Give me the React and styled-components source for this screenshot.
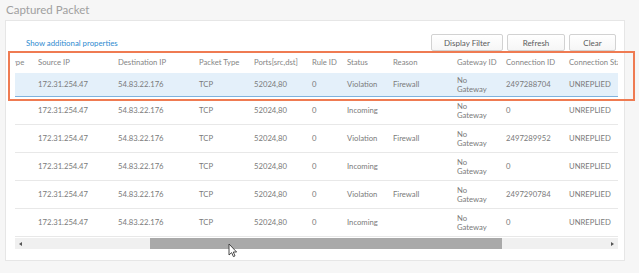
import React from "react";
import styled, { createGlobalStyle } from "styled-components";

const GlobalStyle = createGlobalStyle`
  html, body {
    margin: 0;
    padding: 0;
    background: #f6f6f6;
  }
  body {
    font-family: Lato, "Liberation Sans", sans-serif;
  }
`;

const Page = styled.div`
  position: relative;
  width: 639px;
  height: 273px;
  overflow: hidden;
`;

const Title = styled.h2`
  margin: 0;
  height: 20px;
  padding-left: 6px;
  font-size: 11.5px;
  font-weight: 400;
  line-height: 19px;
  color: #a0a0a0;
`;

const Panel = styled.div`
  margin-left: 5px;
  width: 620px;
  height: 241px;
  background: #fff;
  border: 1px solid #e6e6e6;
  padding: 13px 8px 0 9px;
  box-sizing: border-box;
`;

const Toolbar = styled.div`
  display: flex;
  align-items: center;
  justify-content: space-between;
  height: 17px;
  margin-bottom: 1px;
`;

const Link = styled.a`
  margin-left: 11px;
  font-size: 7.8px;
  color: #2f8bd0;
  text-decoration: none;
  cursor: pointer;
`;

const Buttons = styled.div`
  display: flex;
  gap: 4px;
`;

const Button = styled.button`
  width: ${(p) => p.$w}px;
  height: 17px;
  padding: 0;
  border: 1px solid #d2d2d2;
  border-radius: 2px;
  background: linear-gradient(#ffffff, #f6f6f6);
  font-family: inherit;
  font-size: 8px;
  color: #5a5a5a;
`;

const Grid = styled.div`
  width: 603px;
  overflow: hidden;
`;

const Track = styled.div`
  margin-left: -15px;
  width: max-content;
`;

const Row = styled.div`
  display: flex;
  align-items: center;
  height: ${(p) => p.$h}px;
  box-sizing: border-box;
  background: ${(p) => (p.$selected ? "#e4f0fa" : "transparent")};
  border-bottom: 1px solid
    ${(p) => (p.$selected ? "#7fb2de" : p.$head ? "transparent" : "#e8e8e8")};
`;

const Cell = styled.div`
  flex: none;
  width: ${(p) => p.$w}px;
  padding-left: 8px;
  box-sizing: border-box;
  font-size: 7.7px;
  line-height: 9px;
  color: ${(p) => (p.$head ? "#858585" : "#7a7a7a")};
  white-space: pre;
  overflow: hidden;
`;

const Scrollbar = styled.div`
  position: relative;
  display: flex;
  align-items: center;
  justify-content: space-between;
  height: 11px;
  margin-top: 1px;
  padding: 0 4px;
  background: #f0f0f0;
`;

const Arrow = styled.span`
  width: 0;
  height: 0;
  border-top: 2px solid transparent;
  border-bottom: 2px solid transparent;
  ${(p) =>
    p.$dir === "left"
      ? "border-right: 3px solid #555;"
      : "border-left: 3px solid #555;"}
`;

const Thumb = styled.div`
  position: absolute;
  top: 0;
  bottom: 0;
  background: #a9a9a9;
`;

const Highlight = styled.div`
  position: absolute;
  left: 8px;
  top: 51px;
  width: 627px;
  height: 50px;
  box-sizing: border-box;
  border: 2px solid #ef7b52;
  pointer-events: none;
`;

const Pointer = styled.svg`
  position: absolute;
  left: 228px;
  top: 243px;
`;

const columns = [
  { key: "type", label: "Type", w: 30 },
  { key: "src", label: "Source IP", w: 80 },
  { key: "dst", label: "Destination IP", w: 81 },
  { key: "proto", label: "Packet Type", w: 55 },
  { key: "ports", label: "Ports[src,dst]", w: 58 },
  { key: "rule", label: "Rule ID", w: 35 },
  { key: "status", label: "Status", w: 46 },
  { key: "reason", label: "Reason", w: 64 },
  { key: "gw", label: "Gateway ID", w: 49 },
  { key: "conn", label: "Connection ID", w: 63 },
  { key: "state", label: "Connection State", w: 100 },
];

const base = {
  type: "",
  src: "172.31.254.47",
  dst: "54.83.22.176",
  proto: "TCP",
  ports: "52024,80",
  rule: "0",
  gw: "No\nGateway",
  state: "UNREPLIED",
};

const packets = [
  { ...base, status: "Violation", reason: "Firewall", conn: "2497288704" },
  { ...base, status: "Incoming", reason: "", conn: "0" },
  { ...base, status: "Violation", reason: "Firewall", conn: "2497289952" },
  { ...base, status: "Incoming", reason: "", conn: "0" },
  { ...base, status: "Violation", reason: "Firewall", conn: "2497290784" },
  { ...base, status: "Incoming", reason: "", conn: "0" },
];

const scroll = { left: 135, size: 352 };

const App = () => {
  return (
    <Page>
      <GlobalStyle />
      <Title>Captured Packet</Title>
      <Panel>
        <Toolbar>
          <Link>Show additional properties</Link>
          <Buttons>
            <Button $w={72}>Display Filter</Button>
            <Button $w={58}>Refresh</Button>
            <Button $w={47}>Clear</Button>
          </Buttons>
        </Toolbar>
        <Grid>
          <Track>
            <Row $head $h={21}>
              {columns.map((c) => (
                <Cell key={c.key} $w={c.w} $head>
                  {c.label}
                </Cell>
              ))}
            </Row>
            {packets.map((p, i) => (
              <Row key={i} $h={i === 0 ? 24 : 28} $selected={i === 0}>
                {columns.map((c) => (
                  <Cell key={c.key} $w={c.w}>
                    {p[c.key]}
                  </Cell>
                ))}
              </Row>
            ))}
          </Track>
          <Scrollbar>
            <Arrow $dir="left" />
            <Thumb style={{ left: scroll.left, width: scroll.size }} />
            <Arrow $dir="right" />
          </Scrollbar>
        </Grid>
      </Panel>
      <Highlight />
      <Pointer width="10" height="15" viewBox="0 0 10 15">
        <path
          d="M1 1 L1 12 L3.6 9.6 L5.4 13.6 L7 12.9 L5.3 9 L8.6 9 Z"
          fill="#fff"
          stroke="#333"
          strokeWidth="0.9"
          strokeLinejoin="round"
        />
      </Pointer>
    </Page>
  );
};

export default App;
